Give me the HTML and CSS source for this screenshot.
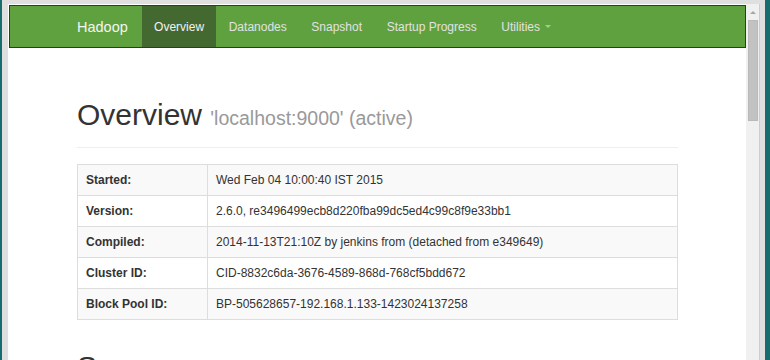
FILE: index.html
```html
<!DOCTYPE html>
<html lang="en">
<head>
    <meta charset="UTF-8">
    <meta name="viewport" content="width=device-width, initial-scale=1.0">
    <title>Namenode information</title>
    <link rel="stylesheet" href="styles.css">
</head>
<body>
    <div class="window">
        <div class="page">
            <nav class="navbar">
                <div class="container navbar-inner">
                    <a class="brand" href="#">Hadoop</a>
                    <ul class="nav">
                        <li class="active"><a href="#">Overview</a></li>
                        <li><a href="#">Datanodes</a></li>
                        <li><a href="#">Snapshot</a></li>
                        <li><a href="#">Startup Progress</a></li>
                        <li><a href="#">Utilities <span class="caret"></span></a></li>
                    </ul>
                </div>
            </nav>

            <div class="container">
                <div class="page-header">
                    <h1>Overview <small>'localhost:9000' (active)</small></h1>
                </div>

                <table class="info-table">
                    <colgroup>
                        <col class="label-col">
                        <col>
                    </colgroup>
                    <tr><th>Started:</th><td>Wed Feb 04 10:00:40 IST 2015</td></tr>
                    <tr><th>Version:</th><td>2.6.0, re3496499ecb8d220fba99dc5ed4c99c8f9e33bb1</td></tr>
                    <tr><th>Compiled:</th><td>2014-11-13T21:10Z by jenkins from (detached from e349649)</td></tr>
                    <tr><th>Cluster ID:</th><td>CID-8832c6da-3676-4589-868d-768cf5bdd672</td></tr>
                    <tr><th>Block Pool ID:</th><td>BP-505628657-192.168.1.133-1423024137258</td></tr>
                </table>

                <div class="page-header page-header-next">
                    <h1>Summary</h1>
                </div>
            </div>
        </div>
        <div class="scrollbar">
            <div class="scroll-arrow"></div>
            <div class="scroll-thumb"></div>
        </div>
    </div>
</body>
</html>
```

FILE: styles.css
```css
/* Desktop + browser frame */
body {
    margin: 0;
    height: 360px;
    overflow: hidden;
    background: #176d6b; /* teal desktop edge */
    font-family: "Liberation Sans", Arial, sans-serif;
    color: #333;
}

.window {
    display: flex;
    height: 360px;
    margin: 0 5px 0 2px;
    padding: 4px 5px 0 6px;
    background: #dfdfdf;
    box-sizing: border-box;
}

.page {
    flex: 1;
    background: #fff;
    padding: 1px 0 0 1px;
    overflow: hidden;
}

/* Scrollbar */
.scrollbar {
    width: 14px;
    flex-shrink: 0;
    background: #f0f0f0;
    border-right: 1px solid #cdcdcd;
    box-sizing: border-box;
    display: flex;
    flex-direction: column;
    align-items: center;
    padding-top: 7px;
}

.scroll-arrow {
    width: 0;
    height: 0;
    border-left: 3px solid transparent;
    border-right: 3px solid transparent;
    border-bottom: 3px solid #a6a6a6;
    margin-bottom: 6px;
}

.scroll-thumb {
    width: 10px;
    height: 101px;
    background: #c2c2c2;
    border: 1px solid #b9b9b9;
    box-sizing: border-box;
}

/* Layout */
.container {
    width: 601px;
    margin: 0 auto;
}

/* Navbar */
.navbar {
    background: #5fa13e;
    border: 1px solid #2f3a2a;
    height: 43px;
    box-sizing: border-box;
}

.navbar-inner {
    display: flex;
    align-items: stretch;
    height: 41px;
}

.brand {
    display: flex;
    align-items: center;
    padding-right: 14px;
    font-size: 14.5px;
    color: #f4f4f4;
    text-decoration: none;
}

.nav {
    display: flex;
    margin: 0;
    padding: 0;
    list-style: none;
}

.nav li a {
    display: flex;
    align-items: center;
    height: 100%;
    padding: 0 12.3px;
    font-size: 12px;
    color: #e2e2e2;
    text-decoration: none;
}

.nav li.active a {
    background: #436931; /* darker green */
    color: #f2f2f2;
}

.caret {
    display: inline-block;
    width: 0;
    height: 0;
    margin-left: 5px;
    border-top: 3px solid rgba(255, 255, 255, 0.45);
    border-left: 3px solid transparent;
    border-right: 3px solid transparent;
}

/* Page header */
.page-header {
    margin: 50px 0 16px;
    padding-bottom: 16px;
    border-bottom: 1px solid #eee;
}

.page-header-next {
    margin-top: 30px;
}

h1 {
    margin: 0;
    font-size: 30px;
    line-height: 33px;
    font-weight: normal;
    color: #333;
}

h1 small {
    font-size: 19.5px;
    line-height: 1;
    color: #999;
}

/* Info table */
.info-table {
    width: 100%;
    border-collapse: collapse;
    border: 1px solid #ddd;
    table-layout: fixed;
    font-size: 12px;
}

.label-col {
    width: 130px;
}

.info-table th,
.info-table td {
    padding: 7px 8px;
    line-height: 16px;
    border: 1px solid #ddd;
    text-align: left;
    white-space: nowrap;
}

.info-table th {
    font-weight: bold;
}

.info-table tr:nth-child(odd) {
    background: #f9f9f9;
}
```
